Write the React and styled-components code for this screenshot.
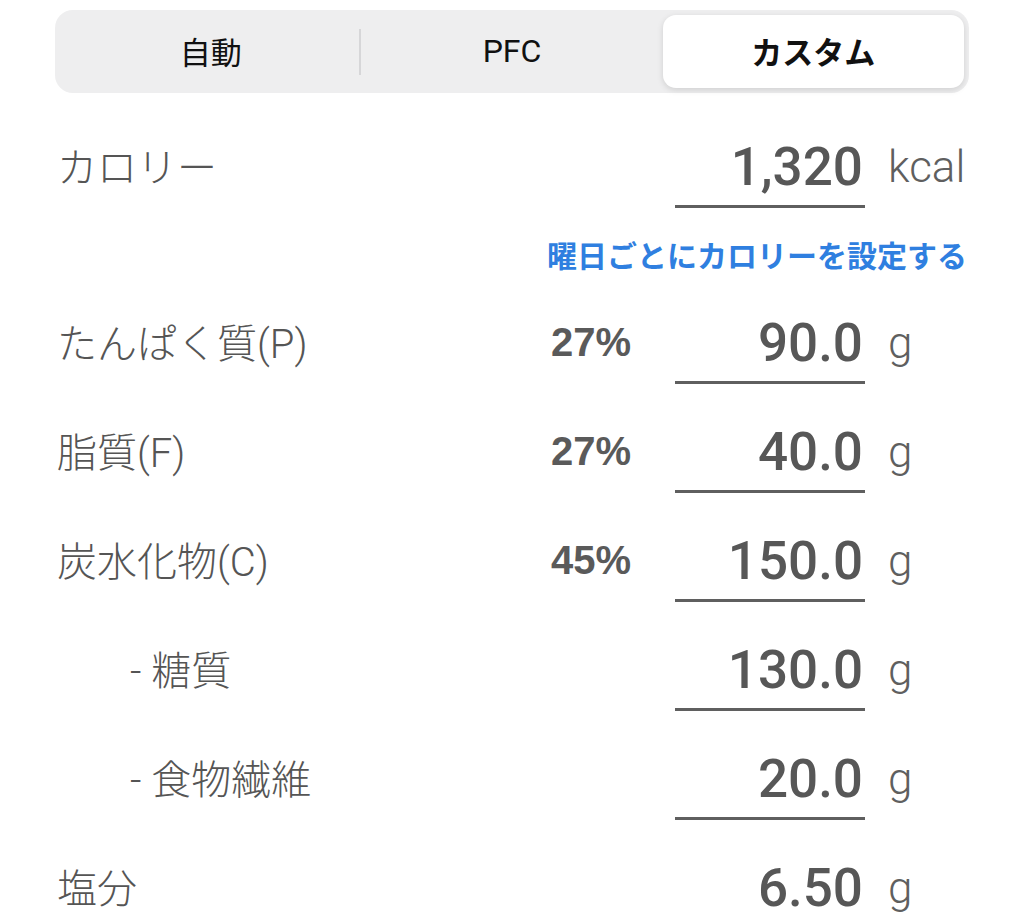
import React from 'react'
import styled, { createGlobalStyle } from 'styled-components'

const GlobalStyle = createGlobalStyle`
  body {
    margin: 0;
    background: #ffffff;
    font-family: "Liberation Sans", "Noto Sans CJK JP", sans-serif;
  }
`;

const Page = styled.div`
  width: 1024px;
  box-sizing: border-box;
  padding: 10px 55px 0;
  display: flex;
  flex-direction: column;
`;

const Segmented = styled.div`
  height: 83px;
  box-sizing: border-box;
  padding: 5px;
  background: #eeeeef;
  border-radius: 18px;
  display: flex;
  align-items: stretch;
`;

const Segment = styled.div`
  flex: 1;
  display: flex;
  align-items: center;
  justify-content: center;
  padding-bottom: 2px;
  border-radius: 13px;
  font-family: ${p => (p.$latin ? 'Roboto, "Liberation Sans", sans-serif' : '"Noto Sans CJK JP", sans-serif')};
  font-size: ${p => (p.$latin ? '32px' : '31px')};
  font-weight: ${p => (p.$active ? 700 : 400)};
  color: #111;
  background: ${p => (p.$active ? '#ffffff' : 'transparent')};
  box-shadow: ${p => (p.$active ? '0 2px 6px rgba(0, 0, 0, 0.13)' : 'none')};
`;

const Divider = styled.div`
  width: 2px;
  height: 46px;
  align-self: center;
  margin-left: -2px;
  background: ${p => (p.$hidden ? 'transparent' : '#d6d6d8')};
`;

const Rows = styled.div`
  margin-top: 37px;
  padding-left: 2px;
  padding-right: 2px;
  display: flex;
  flex-direction: column;
`;

const Row = styled.div`
  display: grid;
  grid-template-columns: 1fr 124px 190px 102px;
  align-items: center;
  margin-bottom: ${p => (p.$last ? 0 : '31px')};
`;

const Label = styled.div`
  font-family: Roboto, "Noto Sans CJK JP", sans-serif;
  font-size: 40px;
  font-weight: 300;
  color: #555;
  padding-left: ${p => (p.$sub ? '73px' : '0')};
  padding-bottom: 8px;
  white-space: nowrap;
`;

const Percent = styled.div`
  font-family: "Liberation Sans", sans-serif;
  font-size: 40px;
  font-weight: 700;
  color: #5a5a5a;
  padding-bottom: 6px;
`;

const ValueBox = styled.div`
  height: 75px;
  line-height: 75px;
  border-bottom: 3px solid #5f5f5f;
  text-align: right;
  padding-right: 2px;
  font-family: Roboto, "Liberation Sans", sans-serif;
  font-size: 53px;
  font-weight: 500;
  color: #575757;
`;

const Unit = styled.div`
  padding-left: 23px;
  padding-bottom: 4px;
  font-family: Roboto, "Liberation Sans", sans-serif;
  font-size: 44px;
  font-weight: 300;
  color: #5f5f5f;
`;

const LinkRow = styled.div`
  height: 98px;
  box-sizing: border-box;
  padding-bottom: 6px;
  display: flex;
  align-items: center;
  justify-content: flex-end;
`;

const Link = styled.a`
  font-family: "Noto Sans CJK JP", sans-serif;
  font-size: 30px;
  font-weight: 700;
  color: #2f7fe0;
  text-decoration: none;
`;

const nutrients = [
  { label: 'たんぱく質(P)', pct: '27%', value: '90.0' },
  { label: '脂質(F)', pct: '27%', value: '40.0' },
  { label: '炭水化物(C)', pct: '45%', value: '150.0' },
  { label: '- 糖質', value: '130.0', sub: true },
  { label: '- 食物繊維', value: '20.0', sub: true },
  { label: '塩分', value: '6.50' },
];

const App = () => {
  return (
    <Page>
      <GlobalStyle />
      <Segmented>
        <Segment>自動</Segment>
        <Divider />
        <Segment $latin>PFC</Segment>
        <Divider $hidden />
        <Segment $active>カスタム</Segment>
      </Segmented>
      <Rows>
        <Row $last>
          <Label>カロリー</Label>
          <div />
          <ValueBox>1,320</ValueBox>
          <Unit>kcal</Unit>
        </Row>
        <LinkRow>
          <Link href="#">曜日ごとにカロリーを設定する</Link>
        </LinkRow>
        {nutrients.map((n, i) => (
          <Row key={n.label} $last={i === nutrients.length - 1}>
            <Label $sub={n.sub}>{n.label}</Label>
            <Percent>{n.pct}</Percent>
            <ValueBox>{n.value}</ValueBox>
            <Unit>g</Unit>
          </Row>
        ))}
      </Rows>
    </Page>
  )
}

export default App
